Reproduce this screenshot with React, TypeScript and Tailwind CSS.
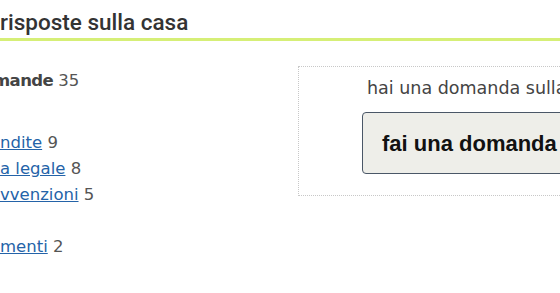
import React from 'react';

const categories = [
  { label: 'ndite', count: 9, top: 'mt-[36px]' },
  { label: 'a legale', count: 8, top: 'mt-0' },
  { label: 'vvenzioni', count: 5, top: 'mt-0' },
  { label: 'menti', count: 2, top: 'mt-[26px]' },
];

const App: React.FC = () => {
  return (
    <div className="w-[560px] h-[293px] overflow-hidden bg-white">
      {/* header */}
      <div className="pt-[8px] border-b-[3px] border-[#d6ef77]">
        <h2 className="h-[30px] text-[22.5px] leading-[28px] font-medium text-[#333] font-['Roboto',sans-serif]">
          risposte sulla casa
        </h2>
      </div>

      <div className="flex font-['DejaVu_Sans',sans-serif] text-[16.5px]">
        {/* left list */}
        <div className="w-[298px] shrink-0 pt-[27px] overflow-hidden">
          <div className="h-[26px] leading-[26px] text-[#555] -ml-[7px]">
            <span className="font-bold text-[#444] tracking-[-0.6px]">mande</span> 35
          </div>
          {categories.map(c => (
            <div key={c.label} className={`h-[26px] leading-[26px] text-[#555] ${c.top}`}>
              <a href="#" className="text-[#2463a8] underline">{c.label}</a> {c.count}
            </div>
          ))}
        </div>

        {/* ask box */}
        <div className="mt-[25px] w-[330px] shrink-0 h-[130px] border border-dotted border-[#c8c8c8] pl-[63px] pt-[11px]">
          <p className="text-[17.5px] text-[#444] leading-[20px] whitespace-nowrap pl-[5px]">hai una domanda sulla casa?</p>
          <button className="mt-[14px] h-[62px] w-[240px] rounded-[4px] border border-[#4a5767] bg-[#eeeee9] text-left pl-[19px] text-[22px] font-bold text-[#111] font-['Liberation_Sans',sans-serif] whitespace-nowrap">
            fai una domanda
          </button>
        </div>
      </div>
    </div>
  );
};

export default App;
